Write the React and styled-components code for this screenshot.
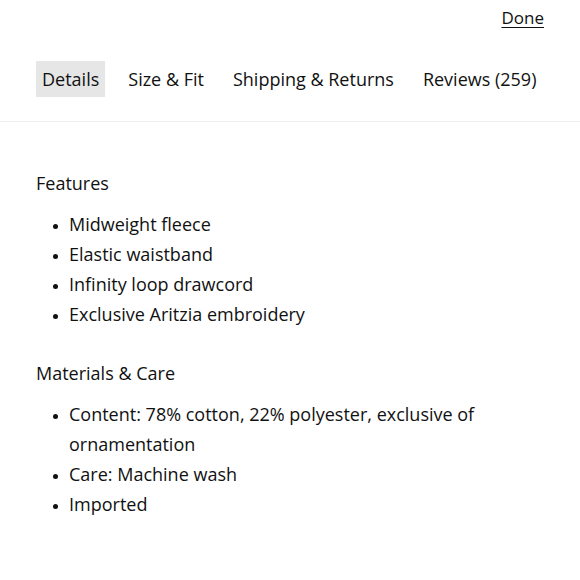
import React from 'react';
import styled, { createGlobalStyle } from 'styled-components';

const GlobalStyle = createGlobalStyle`
	body {
		margin:0;
		background-color:#fff;
		font-family:"Open Sans", Lato, sans-serif;
		color:#111;
	}
`;

const Page = styled.div`
	width:580px;
	min-height:580px;
	box-sizing:border-box;
`;

const Header = styled.div`
	display:flex;
	justify-content:flex-end;
	padding:3px 36px 0;
	height:40px;
	box-sizing:border-box;
`;

const DoneLink = styled.a`
	font-size:17px;
	line-height:30px;
	color:#111;
	text-decoration:underline;
	text-underline-offset:3px;
	cursor:pointer;
`;

const TabBar = styled.div`
	display:flex;
	gap:17px;
	padding:21px 30px 24px 36px;
	border-bottom:1px solid #eee;
`;

const Tab = styled.button`
	flex-shrink:0;
	height:36px;
	padding:0 6px;
	border:0;
	font-family:inherit;
	font-size:18px;
	white-space:nowrap;
	color:#111;
	background-color:${props => (props.$active ? '#e6e6e6' : 'transparent')};
	cursor:pointer;
`;

const Content = styled.div`
	padding:46px 36px 0;
`;

const Section = styled.section`
	& ~ & {
		margin-top:29px;
	}
`;

const SectionTit = styled.h3`
	margin:0;
	font-size:18px;
	font-weight:normal;
	line-height:30px;
`;

const List = styled.ul`
	margin:11px 0 0;
	padding-left:33px;
	font-size:18px;
	line-height:30px;

	& li::marker {
		font-size:13px;
	}
`;

const Item = styled.li`
	padding-left:0;
`;

const tabs = ['Details', 'Size & Fit', 'Shipping & Returns', 'Reviews (259)'];

const sections = [
	{
		title: 'Features',
		items: ['Midweight fleece', 'Elastic waistband', 'Infinity loop drawcord', 'Exclusive Aritzia embroidery']
	},
	{
		title: 'Materials & Care',
		items: ['Content: 78% cotton, 22% polyester, exclusive of ornamentation', 'Care: Machine wash', 'Imported']
	}
];

const App = () => {
	return (
		<Page>
			<GlobalStyle />
			<Header>
				<DoneLink>Done</DoneLink>
			</Header>
			<TabBar>
				{tabs.map((tab, idx) => (
					<Tab key={tab} type="button" $active={idx === 0}>{tab}</Tab>
				))}
			</TabBar>
			<Content>
				{sections.map(sec => (
					<Section key={sec.title}>
						<SectionTit>{sec.title}</SectionTit>
						<List>
							{sec.items.map(item => (
								<Item key={item}>{item}</Item>
							))}
						</List>
					</Section>
				))}
			</Content>
		</Page>
	);
};

export default App;
